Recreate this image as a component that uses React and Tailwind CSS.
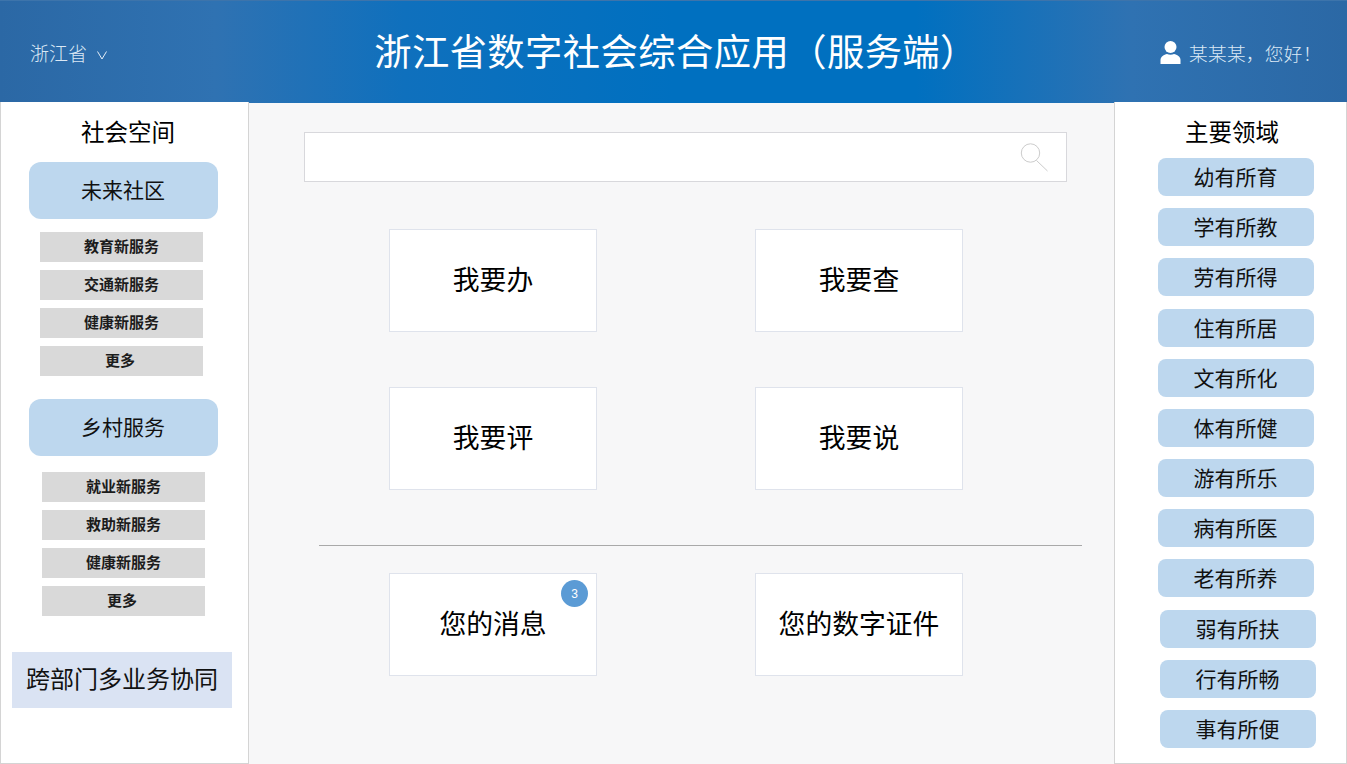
import React from "react";

const cjk = "font-['Noto_Sans_CJK_SC','Liberation_Sans',sans-serif]";

function SubList({ items, className }) {
  return (
    <div className={`flex flex-col gap-2 ${className}`}>
      {items.map((t, i) => (
        <div key={i} className={`h-[30px] w-[163px] bg-[#d9d9d9] flex items-center justify-center pb-1 text-[15px] leading-none font-semibold text-[#1c1c1c] ${t === "更多" ? "pr-[3px]" : ""}`}>
          {t}
        </div>
      ))}
    </div>
  );
}

function Card({ children, badge }) {
  return (
    <div className="relative w-[208px] h-[103px] bg-white border border-[#dfe3ec] flex items-center justify-center pb-[2px] text-[26.8px] leading-none text-black">
      {children}
      {badge && (
        <div className="absolute left-[171px] top-[6px] w-[27px] h-[27px] rounded-full bg-[#5b9bd5] flex items-center justify-center text-[12px] text-white font-['Liberation_Sans',sans-serif]">
          {badge}
        </div>
      )}
    </div>
  );
}

const domains = [
  ["幼有所育", "mt-[11px] ml-[43px]"],
  ["学有所教", "mt-3 ml-[43px]"],
  ["劳有所得", "mt-3 ml-[43px]"],
  ["住有所居", "mt-[13px] ml-[43px]"],
  ["文有所化", "mt-3 ml-[43px]"],
  ["体有所健", "mt-3 ml-[43px]"],
  ["游有所乐", "mt-3 ml-[43px]"],
  ["病有所医", "mt-3 ml-[43px]"],
  ["老有所养", "mt-3 ml-[43px]"],
  ["弱有所扶", "mt-[13px] ml-[45px]"],
  ["行有所畅", "mt-3 ml-[45px]"],
  ["事有所便", "mt-3 ml-[45px]"],
];

export default function App() {
  return (
    <div className={`w-[1347px] h-[764px] overflow-hidden flex flex-col bg-[#f7f7f8] ${cjk}`}>
      <header className="h-[103px] shrink-0 flex items-center bg-[linear-gradient(90deg,#2b68a5_0%,#2f72b2_16%,#0f70bd_30%,#0070c0_50%,#0070c0_68%,#2f72b2_84%,#2b68a5_100%)] border-t border-[#3d74ab]">
        <div className="w-[249px] pl-[30px] pt-[3px] flex items-center text-[19px] font-light text-[#dbe8f5]">
          <span>浙江省</span>
          <svg className="ml-[10px] mt-[3px]" width="10" height="9" viewBox="0 0 10 9" fill="none" stroke="#e3edf7" strokeWidth="1">
            <path d="M0.5 0.5 L5 8 L9.5 0.5" />
          </svg>
        </div>
        <h1 className="w-[865px] pr-[11px] pb-[3px] text-center text-[37.33px] leading-none font-normal text-white tracking-[0.4px] whitespace-nowrap">
          浙江省数字社会综合应用（服务端）
        </h1>
        <div className="flex items-center pl-[46px] text-[18.67px] font-light text-[#dbe8f5]">
          <svg width="21" height="23" viewBox="0 0 21 23" fill="#fff" className="mr-[8px]">
            <circle cx="10.5" cy="6" r="6" />
            <path d="M0.5 23 V19 C0.5 15.5 4 13.5 7 13 C9 14 12 14 14 13 C17 13.5 20.5 15.5 20.5 19 V23 Z" />
          </svg>
          <span className="tracking-[0.3px] pt-[2px] whitespace-nowrap">某某某，您好！</span>
        </div>
      </header>

      <div className="flex-1 flex min-h-0">
        <aside className="relative -mt-px w-[249px] shrink-0 bg-white border-x border-b border-[#d4d4d4] flex flex-col">
          <div className="mt-[13px] ml-[78px] w-[98px] text-center text-[23.5px] leading-[32px] text-black whitespace-nowrap">社会空间</div>
          <div className="mt-[15px] ml-[28px] w-[189px] h-[57px] rounded-[12px] bg-[#bdd7ee] flex items-center justify-center pb-px pr-px text-[21px] text-[#111]">未来社区</div>
          <SubList className="mt-[13px] ml-[39px]" items={["教育新服务", "交通新服务", "健康新服务", "更多"]} />
          <div className="mt-[23px] ml-[28px] w-[189px] h-[57px] rounded-[12px] bg-[#bdd7ee] flex items-center justify-center pb-px pr-px text-[21px] text-[#111]">乡村服务</div>
          <SubList className="mt-4 ml-[41px]" items={["就业新服务", "救助新服务", "健康新服务", "更多"]} />
          <div className="mt-9 ml-[11px] w-[220px] h-[56px] bg-[#dae3f3] flex items-center justify-center pb-1 text-[24px] text-[#111] whitespace-nowrap">跨部门多业务协同</div>
        </aside>

        <main className="flex-1 min-w-0 flex flex-col">
          <div className="mt-[29px] ml-[55px] w-[763px] h-[50px] bg-white border border-[#d8d8dc] flex items-center justify-end pr-[17px]">
            <svg width="29" height="29" viewBox="0 0 29 29" fill="none" stroke="#cccccc" strokeWidth="1">
              <circle cx="10.5" cy="10" r="9.2" />
              <path d="M16.5 17.5 L27.5 28" />
            </svg>
          </div>
          <div className="mt-[47px] ml-[140px] flex gap-[158px]">
            <Card>我要办</Card>
            <Card>我要查</Card>
          </div>
          <div className="mt-[55px] ml-[140px] flex gap-[158px]">
            <Card>我要评</Card>
            <Card>我要说</Card>
          </div>
          <div className="mt-[55px] ml-[70px] w-[763px] h-px bg-[#a9a9a9]" />
          <div className="mt-[27px] ml-[140px] flex gap-[158px]">
            <Card badge="3">您的消息</Card>
            <Card>您的数字证件</Card>
          </div>
        </main>

        <aside className="relative -mt-px w-[233px] shrink-0 bg-white border-x border-b border-[#d4d4d4] flex flex-col">
          <div className="mt-[13px] ml-[70px] w-[94px] text-center text-[23.5px] leading-[32px] text-black whitespace-nowrap">主要领域</div>
          {domains.map(([t, c]) => (
            <div key={t} className={`${c} w-[156px] h-[38px] rounded-[8px] bg-[#bdd7ee] flex items-center justify-center pr-px text-[21px] text-[#111] shrink-0`}>
              {t}
            </div>
          ))}
        </aside>
      </div>
    </div>
  );
}
